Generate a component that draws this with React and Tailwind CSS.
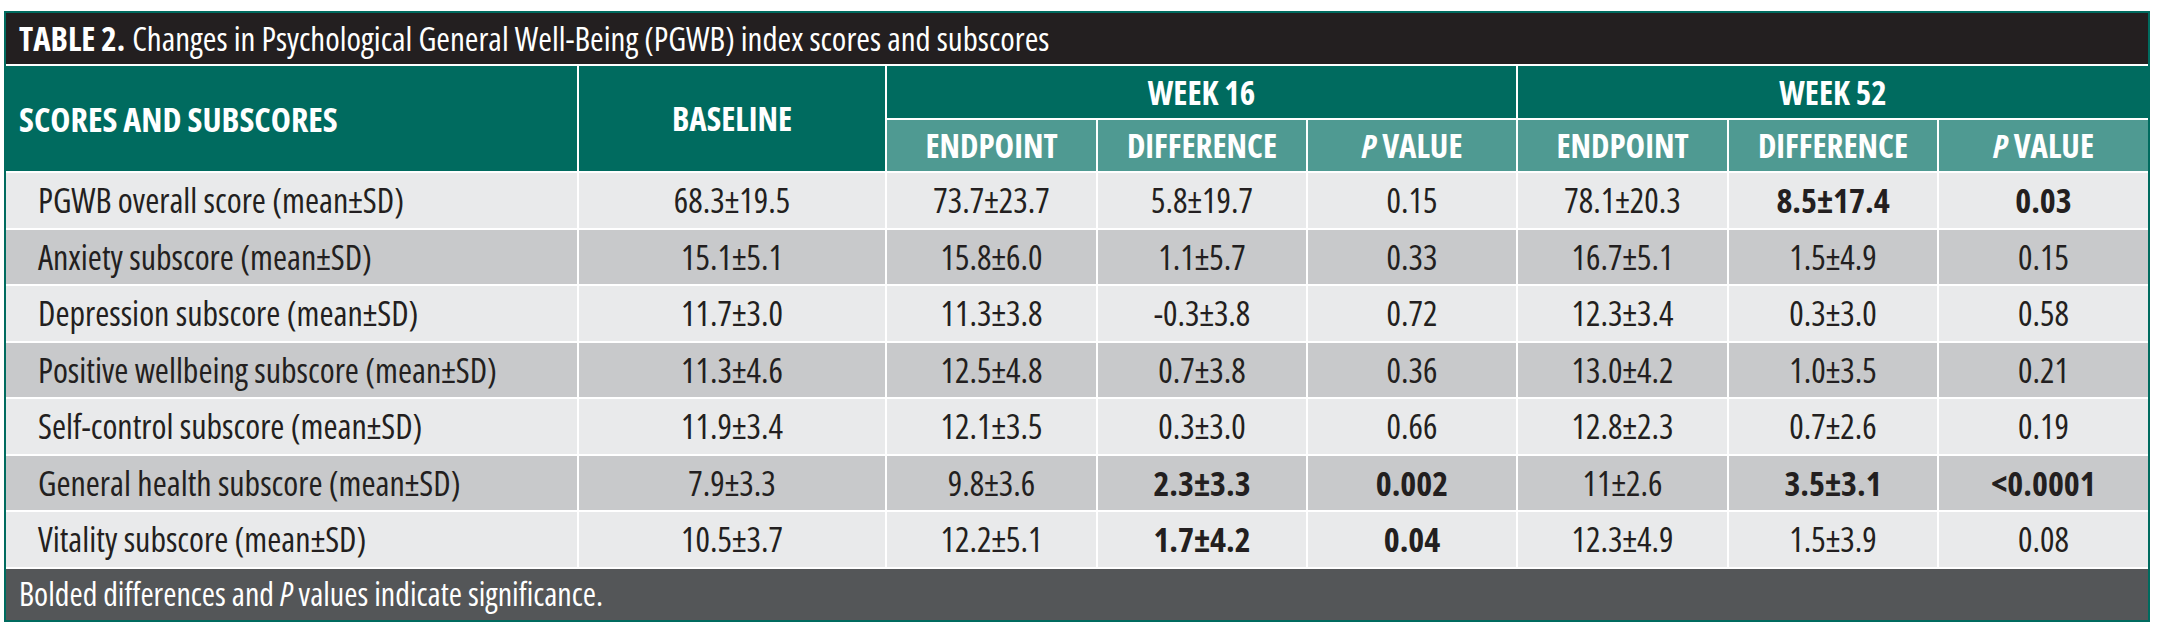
const rows = [
  { label: 'PGWB overall score (mean±SD)', shade: 'light', cells: ['68.3±19.5', '73.7±23.7', '5.8±19.7', '0.15', '78.1±20.3', ['8.5±17.4'], ['0.03']] },
  { label: 'Anxiety subscore (mean±SD)', shade: 'dark', cells: ['15.1±5.1', '15.8±6.0', '1.1±5.7', '0.33', '16.7±5.1', '1.5±4.9', '0.15'] },
  { label: 'Depression subscore (mean±SD)', shade: 'light', cells: ['11.7±3.0', '11.3±3.8', '-0.3±3.8', '0.72', '12.3±3.4', '0.3±3.0', '0.58'] },
  { label: 'Positive wellbeing subscore (mean±SD)', shade: 'dark', cells: ['11.3±4.6', '12.5±4.8', '0.7±3.8', '0.36', '13.0±4.2', '1.0±3.5', '0.21'] },
  { label: 'Self-control subscore (mean±SD)', shade: 'light', cells: ['11.9±3.4', '12.1±3.5', '0.3±3.0', '0.66', '12.8±2.3', '0.7±2.6', '0.19'] },
  { label: 'General health subscore (mean±SD)', shade: 'dark', cells: ['7.9±3.3', '9.8±3.6', ['2.3±3.3'], ['0.002'], '11±2.6', ['3.5±3.1'], ['<0.0001']] },
  { label: 'Vitality subscore (mean±SD)', shade: 'light', cells: ['10.5±3.7', '12.2±5.1', ['1.7±4.2'], ['0.04'], '12.3±4.9', '1.5±3.9', '0.08'] },
];

// bolded values are wrapped in an array
const Cell = ({ value, shade }) => {
  const bold = Array.isArray(value);
  const text = bold ? value[0] : value;
  return (
    <div
      className={`flex items-center justify-center text-[34px] text-[#231f20] ${
        shade === 'dark' ? 'bg-[#c8c9cb]' : 'bg-[#e9eaeb]'
      } ${bold ? 'font-bold' : 'font-normal'}`}
    >
      {text}
    </div>
  );
};

const SubHead = ({ children }) => (
  <div className="flex items-center justify-center bg-[#4f9a92] text-[33px] font-bold text-white">
    {children}
  </div>
);

const PValue = () => (
  <SubHead>
    <span className="italic">P</span>
    <span className="ml-[6px]">VALUE</span>
  </SubHead>
);

export default function App() {
  return (
    <div
      className="min-h-[636px] bg-white pt-[11px] pl-[4px] leading-none [font-stretch:condensed]"
      style={{ fontFamily: '"Open Sans", "Liberation Sans", sans-serif' }}
    >
      <div className="w-[2146px] border-2 border-[#006b5f] bg-white">
        {/* title bar */}
        <div className="flex h-[51px] items-center bg-[#231f20] pl-[13px] text-[33px] text-white">
          <span className="font-bold">TABLE 2.</span>
          <span className="ml-[7px]">Changes in Psychological General Well-Being (PGWB) index scores and subscores</span>
        </div>

        {/* header */}
        <div className="mt-[2px] grid grid-cols-[571px_306px_209px_208px_208px_209px_208px_209px] grid-rows-[52px_51px] gap-[2px]">
          <div className="row-span-2 flex items-center bg-[#006b5f] pl-[13px] text-[34px] font-bold text-white">
            SCORES AND SUBSCORES
          </div>
          <div className="row-span-2 flex items-center justify-center bg-[#006b5f] text-[33px] font-bold text-white">
            BASELINE
          </div>
          <div className="col-span-3 flex items-center justify-center bg-[#006b5f] text-[33px] font-bold text-white">
            WEEK 16
          </div>
          <div className="col-span-3 flex items-center justify-center bg-[#006b5f] text-[33px] font-bold text-white">
            WEEK 52
          </div>
          <SubHead>ENDPOINT</SubHead>
          <SubHead>DIFFERENCE</SubHead>
          <PValue />
          <SubHead>ENDPOINT</SubHead>
          <SubHead>DIFFERENCE</SubHead>
          <PValue />
        </div>

        {/* body rows */}
        <div className="mt-[2px] grid grid-cols-[571px_306px_209px_208px_208px_209px_208px_209px] auto-rows-[54.5px] gap-[2px]">
          {rows.map((row) => (
            <div key={row.label} className="contents">
              <div
                className={`flex items-center pl-[32px] text-[34px] text-[#231f20] ${
                  row.shade === 'dark' ? 'bg-[#c8c9cb]' : 'bg-[#e9eaeb]'
                }`}
              >
                {row.label}
              </div>
              {row.cells.map((c, i) => (
                <Cell key={i} value={c} shade={row.shade} />
              ))}
            </div>
          ))}
        </div>

        {/* footnote */}
        <div className="mt-[2px] flex h-[51px] items-center bg-[#545658] pl-[13px] text-[32px] text-white">
          Bolded differences and&nbsp;<span className="italic">P</span>&nbsp;values indicate significance.
        </div>
      </div>
    </div>
  );
}
